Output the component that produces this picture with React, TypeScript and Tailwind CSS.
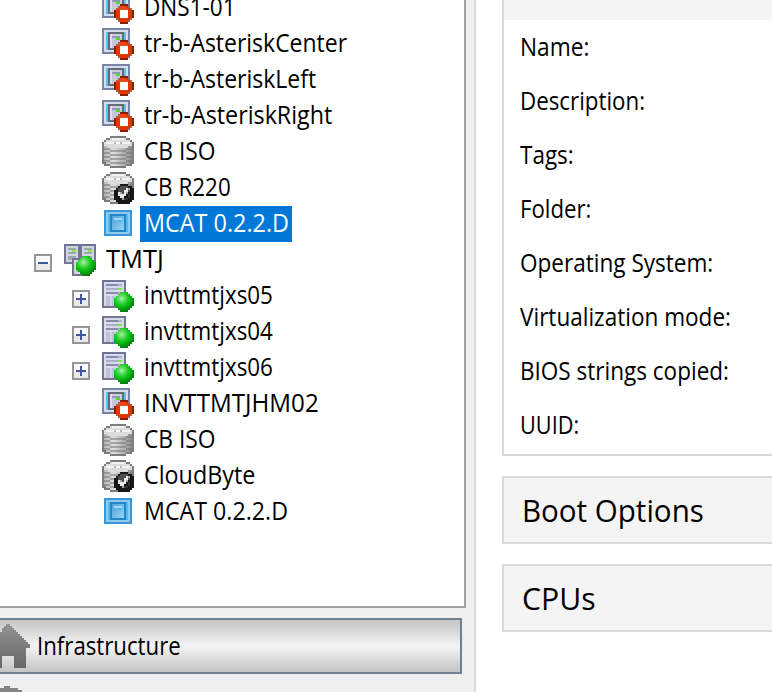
import { useLayoutEffect, useRef, useState, type ReactNode } from "react";

type Kind = "halted" | "storage" | "storageDefault" | "template" | "host" | "pool";

/** Single-line label condensed horizontally to a given width. */
function Label({ text, width, className = "" }: { text: string; width: number; className?: string }) {
  const ref = useRef<HTMLSpanElement>(null);
  const [scale, setScale] = useState(1);
  useLayoutEffect(() => {
    if (ref.current) setScale(width / ref.current.offsetWidth);
  }, [width, text]);
  return (
    <span className={`block whitespace-nowrap ${className}`} style={{ width }}>
      <span ref={ref} className="inline-block origin-left" style={{ transform: `scaleX(${scale})` }}>
        {text}
      </span>
    </span>
  );
}

function Glyph({ children }: { children: ReactNode }) {
  return (
    <svg viewBox="0 0 16 16" className="h-8 w-8 shrink-0" shapeRendering="crispEdges">
      {children}
    </svg>
  );
}

function Halted() {
  return (
    <Glyph>
      <path fill="#7a84a6" d="M0 0h14v13H0z" />
      <path fill="#d9dcea" d="M1 1h12v11H1z" />
      <path fill="#5cc3ee" d="M2 2h1v9H2zM11 2h1v9h-1z" />
      <path fill="#626c78" d="M3 2h8v9H3z" />
      <path fill="#c9cdd8" d="M4 3h6v7H4z" />
      <path fill="#dcdfe8" d="M4 3h1v7H4z" />
      <path fill="#9296ba" d="M5 4h4v1H5z" />
      <path fill="#c3c6da" d="M5 5h4v5H5z" />
      <path fill="#4be01e" d="M7 5h2v1H7z" />
      <path fill="#a4604f" d="M9 6h4v1h1v1h1v1h1v4h-1v1h-1v1h-1v1H9v-1H8v-1H7v-1H6V9h1V8h1V7h1z" />
      <path fill="#8b1d08" d="M9 6h4v1H9zM6 9h1v4H6zM15 9h1v4h-1zM9 15h4v1H9z" />
      <path fill="#df3703" d="M9 7h4v1h1v1h1v4h-1v1h-1v1H9v-1H8v-1H7V9h1V8h1z" />
      <path fill="#ee4a17" d="M9 7h3v1h1v1H8V8h1z" />
      <path fill="#fff" d="M9 9h4v4H9z" />
    </Glyph>
  );
}

function Storage({ isDefault = false }: { isDefault?: boolean }) {
  return (
    <Glyph>
      <defs>
        <linearGradient id="disk">
          <stop offset="0" stopColor="#b4b4b4" />
          <stop offset=".35" stopColor="#dedede" />
          <stop offset="1" stopColor="#8c8c8c" />
        </linearGradient>
      </defs>
      <path fill="#7d7d7d" d="M4 0h8v1h2v1h1v1h1v11h-1v1h-3v1H4v-1H1v-1H0V3h1V2h1V1h2z" />
      <path fill="url(#disk)" d="M1 4h14v9h-1v1h-2v1H4v-1H2v-1H1z" />
      <path
        fill="#777"
        opacity=".55"
        d="M1 6h3v1H1zM12 6h3v1h-3zM4 7h8v1H4zM1 8h3v1H1zM12 8h3v1h-3zM4 9h8v1H4zM1 10h3v1H1zM12 10h3v1h-3zM4 11h8v1H4zM1 12h3v1H1zM12 12h3v1h-3zM4 13h8v1H4z"
      />
      <path fill="#dcdcdc" d="M4 1h8v1h2v1h1v2h-2v1H3V5H1V3h1V2h2z" />
      <path fill="#f3f3f3" d="M2 3h4v1H2zM10 3h4v1h-4zM5 1h6v1H5z" />
      <path fill="#b4b4b4" d="M6 3h4v1H6z" />
      <path fill="#fff" d="M7 3h2v1H7z" />
      {isDefault && (
        <>
          <path fill="#161616" d="M9 6h4v1h2v1h1v6h-1v1h-1v1H8v-1H7v-1H6V9h1V8h1V7h1z" />
          <path fill="#4e4e4e" d="M9 7h4v1h1v2h-1v1h-2v1H9v-1H8V8h1z" />
          <path fill="#333" d="M13 11h1v2h-1zM11 13h2v1h-2z" />
          <path fill="#e8e8e8" d="M12 8h1v1h-1zM11 9h2v1h-2zM11 10h1v1h-1zM8 10h1v1H8zM8 11h4v1H8zM9 12h2v1H9z" />
          <path fill="#a0a0a0" d="M13 8h1v1h-1zM9 10h1v1H9zM12 10h1v1h-1zM10 13h1v1h-1z" />
        </>
      )}
    </Glyph>
  );
}

function Template() {
  return (
    <Glyph>
      <defs>
        <linearGradient id="tpl" x2="1" y2="1">
          <stop offset="0" stopColor="#4ea3dc" />
          <stop offset="1" stopColor="#9bd3f4" />
        </linearGradient>
      </defs>
      <path fill="#3897d7" d="M1 1h14v13H1z" />
      <path fill="#8fc9ed" d="M2 2h12v11H2z" />
      <path fill="#55b8eb" d="M3 3h1v9H3zM12 3h1v9h-1z" />
      <path fill="#2384c6" d="M4 3h8v9H4z" />
      <path fill="url(#tpl)" d="M5 4h6v7H5z" />
      <path fill="#a5dcfa" d="M6 5h4v1H6z" />
      <path fill="#45b5ef" d="M8 6h2v1H8z" />
    </Glyph>
  );
}

function Ball() {
  return (
    <>
      <defs>
        <radialGradient id="ball" cx=".38" cy=".32" r=".68">
          <stop offset="0" stopColor="#a1f3a0" />
          <stop offset=".35" stopColor="#3fd540" />
          <stop offset=".6" stopColor="#08bf12" />
          <stop offset="1" stopColor="#067d10" />
        </radialGradient>
      </defs>
      <path fill="url(#ball)" d="M9 6h4v1h1v1h1v1h1v4h-1v1h-1v1h-1v1H9v-1H8v-1H7v-1H6V9h1V8h1V7h1z" />
    </>
  );
}

function Host() {
  return (
    <Glyph>
      <path fill="#6f7593" d="M0 0h12v14H0z" />
      <path fill="#d7daea" d="M1 1h10v12H1z" />
      <path fill="#a9aec8" d="M2 2h8v1H2zM2 4h8v1H2zM2 6h8v1H2z" />
      <path fill="#858cac" d="M2 2h6v1H2zM2 6h6v1H2z" />
      <path fill="#7eea3e" d="M8 4h2v1H8z" />
      <path fill="#bec2d7" d="M2 8h4v5H2zM6 8h4v5H6z" />
      <path fill="#d1d4e3" d="M4 8h1v5H4z" />
      <Ball />
    </Glyph>
  );
}

function Pool() {
  return (
    <Glyph>
      <path fill="#6f7593" d="M0 0h16v10H0z" />
      <path fill="#d2d4dc" d="M1 1h6v8H1zM9 1h6v8H9z" />
      <path fill="#a0a4b3" d="M2 2h4v1H2zM2 4h4v1H2zM2 6h4v2H2zM10 2h4v1h-4zM10 4h4v1h-4zM10 6h4v2h-4z" />
      <path fill="#82ec37" d="M4 3h2v1H4zM12 3h2v1h-2z" />
      <path fill="#6f7593" d="M4 7h8v9H4z" />
      <path fill="#d5d7df" d="M5 8h6v7H5z" />
      <path fill="#aeb2c2" d="M6 9h4v1H6zM6 11h4v1H6zM6 13h4v1H6z" />
      <Ball />
    </Glyph>
  );
}

function Icon({ kind }: { kind: Kind }) {
  switch (kind) {
    case "halted":
      return <Halted />;
    case "storage":
      return <Storage />;
    case "storageDefault":
      return <Storage isDefault />;
    case "template":
      return <Template />;
    case "host":
      return <Host />;
    case "pool":
      return <Pool />;
  }
}

function Toggle({ open = false }: { open?: boolean }) {
  return (
    <svg viewBox="0 0 9 9" className="mt-2.5 h-[18px] w-[18px] shrink-0" shapeRendering="crispEdges">
      <path fill="#969696" d="M0 0h9v9H0z" />
      <path fill="#fafafa" d="M1 1h7v7H1z" />
      <path fill="#e9e9e9" d="M1 5h7v3H1z" />
      <path fill="#3e57a5" d={open ? "M2 4h5v1H2z" : "M2 4h5v1H2zM4 2h1v5H4z"} />
    </svg>
  );
}

const rows: { kind: Kind; text: string; width: number; selected?: boolean }[] = [
  { kind: "halted", text: "DNS1-01", width: 92 },
  { kind: "halted", text: "tr-b-AsteriskCenter", width: 203 },
  { kind: "halted", text: "tr-b-AsteriskLeft", width: 172 },
  { kind: "halted", text: "tr-b-AsteriskRight", width: 188 },
  { kind: "storage", text: "CB ISO", width: 72 },
  { kind: "storageDefault", text: "CB R220", width: 87 },
  { kind: "template", text: "MCAT 0.2.2.D", width: 145, selected: true },
  { kind: "pool", text: "TMTJ", width: 58 },
  { kind: "host", text: "invttmtjxs05", width: 129 },
  { kind: "host", text: "invttmtjxs04", width: 129 },
  { kind: "host", text: "invttmtjxs06", width: 129 },
  { kind: "halted", text: "INVTTMTJHM02", width: 175 },
  { kind: "storage", text: "CB ISO", width: 72 },
  { kind: "storageDefault", text: "CloudByte", width: 111 },
  { kind: "template", text: "MCAT 0.2.2.D", width: 144 },
];

const fields = [
  { text: "Name:", width: 69 },
  { text: "Description:", width: 125 },
  { text: "Tags:", width: 54 },
  { text: "Folder:", width: 71 },
  { text: "Operating System:", width: 193 },
  { text: "Virtualization mode:", width: 211 },
  { text: "BIOS strings copied:", width: 209 },
  { text: "UUID:", width: 59 },
];

export default function App() {
  return (
    <div className="flex h-[692px] w-[772px] overflow-hidden bg-white font-['Open_Sans',sans-serif] text-[25px] leading-8 text-black">
      <aside className="flex w-[476px] shrink-0 flex-col border-r-2 border-[#dadada] bg-[#efefef]">
        <div className="h-[608px] w-[466px] shrink-0 overflow-hidden border-r-2 border-b-2 border-[#a0a0a0] bg-white">
          <div className="-mt-2.5">
            {rows.map((row, i) => (
              <div
                key={i}
                className={`flex h-9 items-start pt-0.5 ${row.kind === "pool" ? "pl-[34px]" : row.kind === "host" ? "pl-[72px]" : "pl-[102px]"}`}
              >
                {(row.kind === "pool" || row.kind === "host") && (
                  <div className="mr-3 flex">
                    <Toggle open={row.kind === "pool"} />
                  </div>
                )}
                <Icon kind={row.kind} />
                <div
                  className={`-mt-0.5 ml-1.5 h-9 pl-1 ${row.selected ? "bg-[#0078d7] pr-[3px] text-white" : ""}`}
                >
                  <Label text={row.text} width={row.width} />
                </div>
              </div>
            ))}
          </div>
        </div>
        <div className="mt-2.5 flex h-14 w-[462px] shrink-0 border-2 border-l-0 border-[#708090] bg-[linear-gradient(#c5c5c5,#f3f3f3_50%,#c5c5c5)]">
          <svg viewBox="0 0 30 44" className="mt-1 h-11 w-[30px]" shapeRendering="crispEdges">
            <defs>
              <linearGradient id="home" x2="0" y2="1">
                <stop offset="0" stopColor="#929292" />
                <stop offset="1" stopColor="#686868" />
              </linearGradient>
            </defs>
            <path
              fill="url(#home)"
              d="M6 0h4v2h2v2h2v2h2v2h2v2h2v2h2v2h2v2h2v2h2v2h2v2h2v2h-6v20H14V32H2v12H0V8h2V4h2V2h2z"
            />
          </svg>
          <Label text="Infrastructure" width={144} className="ml-[7px] pt-[9px]" />
        </div>
        <svg viewBox="0 0 24 6" className="mt-3 h-1.5 w-6" shapeRendering="crispEdges">
          <path fill="#858585" d="M4 0h6v2h8v2h4v2H0V2h4z" />
        </svg>
      </aside>
      <main className="flex flex-1 flex-col gap-5 overflow-hidden pl-[26px]">
        <section className="h-[456px] border-b-2 border-l-2 border-[#dadada]">
          <div className="h-5 bg-[#f4f4f4]" />
          <div className="pt-2.5 pl-4">
            {fields.map((field) => (
              <div key={field.text} className="h-[54px]">
                <Label text={field.text} width={field.width} />
              </div>
            ))}
          </div>
        </section>
        <section className="flex h-[68px] items-center border-y-2 border-l-2 border-[#dadada] bg-[#f4f4f4] pl-[18px] text-[31px]">
          <Label text="Boot Options" width={182} />
        </section>
        <section className="flex h-[68px] items-center border-y-2 border-l-2 border-[#dadada] bg-[#f4f4f4] pl-[18px] text-[31px]">
          <Label text="CPUs" width={74} />
        </section>
      </main>
    </div>
  );
}
